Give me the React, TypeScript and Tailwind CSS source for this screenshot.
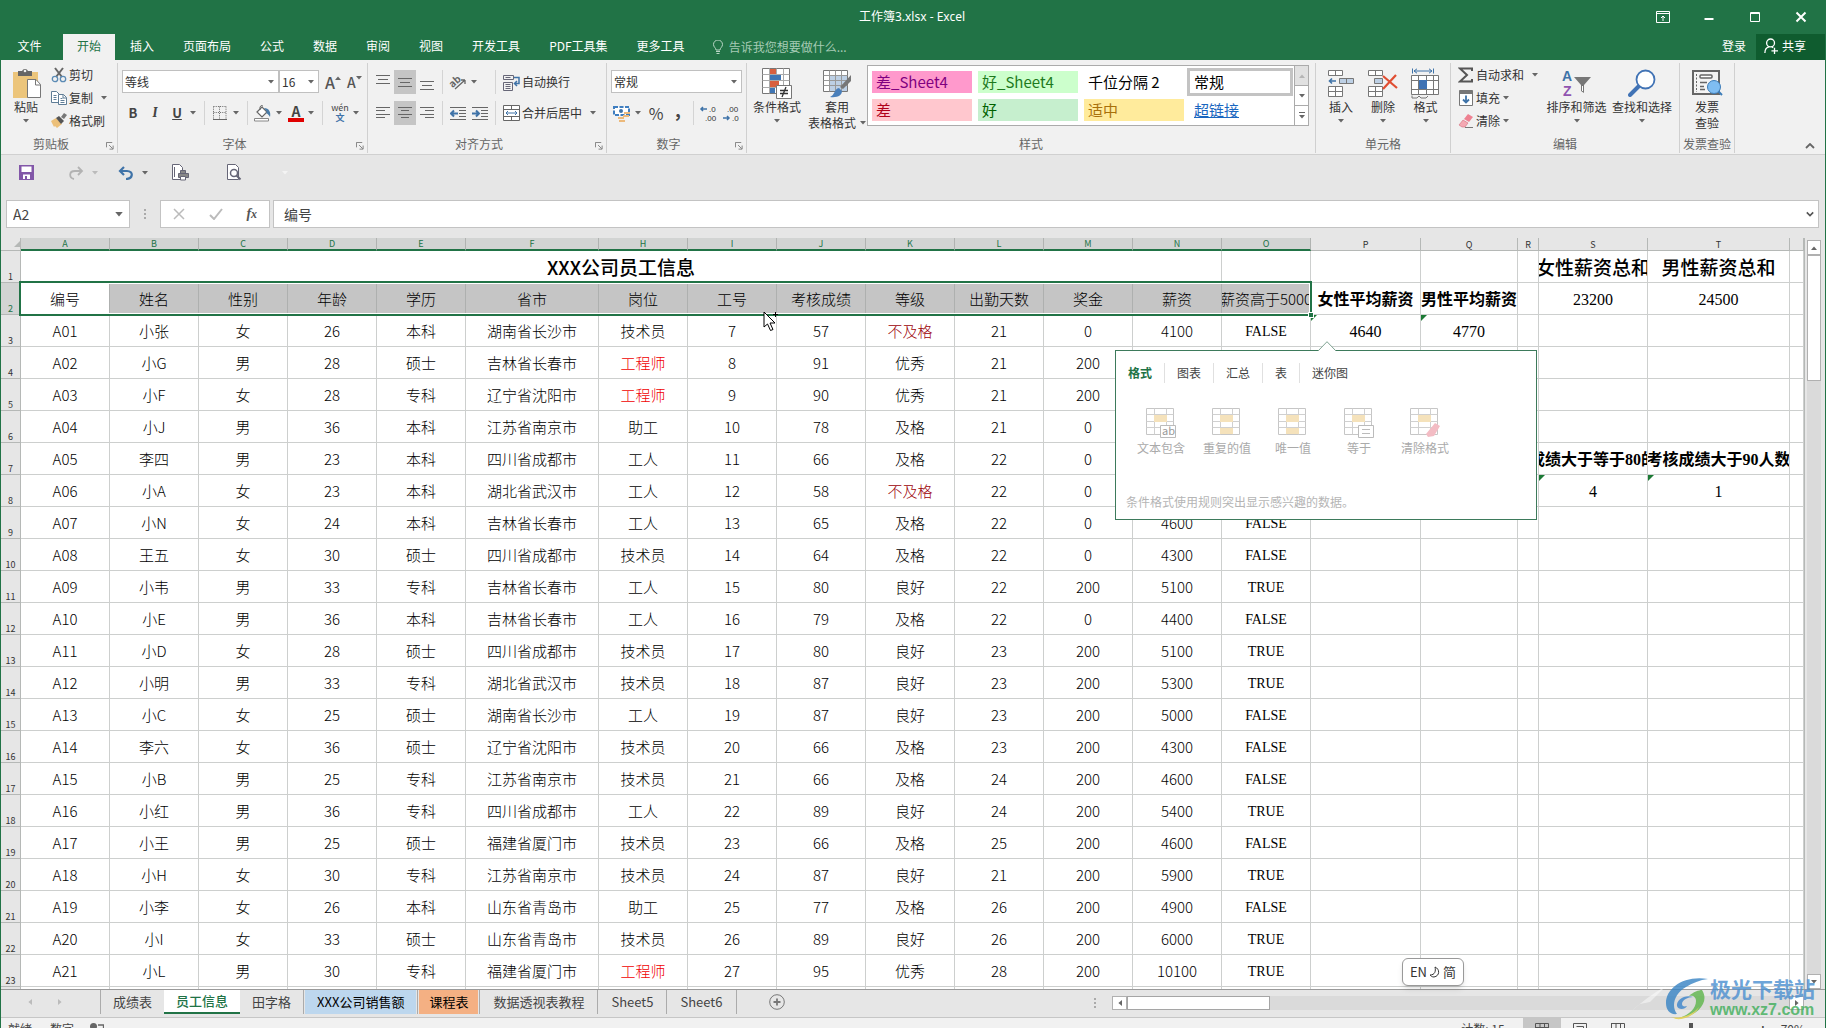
import { useState } from "react";
import type { ReactNode } from "react";
import clsx from "clsx";

type Row = string[];

const columns = [
  { id: "A", width: "w-[89px]" },
  { id: "B", width: "w-[89px]" },
  { id: "C", width: "w-[89px]" },
  { id: "D", width: "w-[89px]" },
  { id: "E", width: "w-[89px]" },
  { id: "F", width: "w-[133px]" },
  { id: "H", width: "w-[89px]" },
  { id: "I", width: "w-[89px]" },
  { id: "J", width: "w-[89px]" },
  { id: "K", width: "w-[89px]" },
  { id: "L", width: "w-[89px]" },
  { id: "M", width: "w-[89px]" },
  { id: "N", width: "w-[89px]" },
  { id: "O", width: "w-[89px]" },
  { id: "P", width: "w-[110px]" },
  { id: "Q", width: "w-[97px]" },
  { id: "R", width: "w-[21px]" },
  { id: "S", width: "w-[109px]" },
  { id: "T", width: "w-[142px]" },
  { id: "", width: "" },
];

const headings = ["编号", "姓名", "性别", "年龄", "学历", "省市", "岗位", "工号", "考核成绩", "等级", "出勤天数", "奖金", "薪资", "薪资高于5000"];

const employees: Row[] = [
  ["A01", "小张", "女", "26", "本科", "湖南省长沙市", "技术员", "7", "57", "不及格", "21", "0", "4100", "FALSE"],
  ["A02", "小G", "男", "28", "硕士", "吉林省长春市", "工程师", "8", "91", "优秀", "21", "200", "", ""],
  ["A03", "小F", "女", "28", "专科", "辽宁省沈阳市", "工程师", "9", "90", "优秀", "21", "200", "", ""],
  ["A04", "小J", "男", "36", "本科", "江苏省南京市", "助工", "10", "78", "及格", "21", "0", "", ""],
  ["A05", "李四", "男", "23", "本科", "四川省成都市", "工人", "11", "66", "及格", "22", "0", "", ""],
  ["A06", "小A", "女", "23", "本科", "湖北省武汉市", "工人", "12", "58", "不及格", "22", "0", "", ""],
  ["A07", "小N", "女", "24", "本科", "吉林省长春市", "工人", "13", "65", "及格", "22", "0", "4600", "FALSE"],
  ["A08", "王五", "女", "30", "硕士", "四川省成都市", "技术员", "14", "64", "及格", "22", "0", "4300", "FALSE"],
  ["A09", "小韦", "男", "33", "专科", "吉林省长春市", "工人", "15", "80", "良好", "22", "200", "5100", "TRUE"],
  ["A10", "小E", "男", "36", "本科", "吉林省长春市", "工人", "16", "79", "及格", "22", "0", "4400", "FALSE"],
  ["A11", "小D", "女", "28", "硕士", "四川省成都市", "技术员", "17", "80", "良好", "23", "200", "5100", "TRUE"],
  ["A12", "小明", "男", "33", "专科", "湖北省武汉市", "技术员", "18", "87", "良好", "23", "200", "5300", "TRUE"],
  ["A13", "小C", "女", "25", "硕士", "湖南省长沙市", "工人", "19", "87", "良好", "23", "200", "5000", "FALSE"],
  ["A14", "李六", "女", "36", "硕士", "辽宁省沈阳市", "技术员", "20", "66", "及格", "23", "200", "4300", "FALSE"],
  ["A15", "小B", "男", "25", "专科", "江苏省南京市", "技术员", "21", "66", "及格", "24", "200", "4600", "FALSE"],
  ["A16", "小红", "男", "36", "专科", "四川省成都市", "工人", "22", "89", "良好", "24", "200", "5400", "TRUE"],
  ["A17", "小王", "男", "25", "硕士", "福建省厦门市", "技术员", "23", "66", "及格", "25", "200", "4600", "FALSE"],
  ["A18", "小H", "女", "30", "专科", "江苏省南京市", "技术员", "24", "87", "良好", "21", "200", "5900", "TRUE"],
  ["A19", "小李", "女", "26", "本科", "山东省青岛市", "助工", "25", "77", "及格", "26", "200", "4900", "FALSE"],
  ["A20", "小I", "女", "33", "硕士", "山东省青岛市", "技术员", "26", "89", "良好", "26", "200", "6000", "TRUE"],
  ["A21", "小L", "男", "30", "专科", "福建省厦门市", "工程师", "27", "95", "优秀", "28", "200", "10100", "TRUE"],
];

// summary cells to the right of the employee list
const extras: Record<string, { text: string; kind: "title" | "bold" | "number"; flag?: boolean }> = {
  S1: { text: "女性薪资总和", kind: "title" },
  T1: { text: "男性薪资总和", kind: "title" },
  P2: { text: "女性平均薪资", kind: "bold" },
  Q2: { text: "男性平均薪资", kind: "bold" },
  S2: { text: "23200", kind: "number" },
  T2: { text: "24500", kind: "number" },
  P3: { text: "4640", kind: "number", flag: true },
  Q3: { text: "4770", kind: "number", flag: true },
  S7: { text: "考核成绩大于等于80的人数", kind: "bold" },
  T7: { text: "考核成绩大于90人数", kind: "bold" },
  S8: { text: "4", kind: "number", flag: true },
  T8: { text: "1", kind: "number", flag: true },
};

const ribbonTabs = ["插入", "页面布局", "公式", "数据", "审阅", "视图", "开发工具", "PDF工具集", "更多工具"];

const Caret = ({ className }: { className?: string }) => (
  <svg viewBox="0 0 6 4" className={clsx("h-1 w-1.5 shrink-0 fill-[#666]", className)}>
    <path d="M0 0h6L3 3.6z" />
  </svg>
);

const Launcher = () => (
  <button aria-label="更多选项" className="absolute right-0.5 bottom-0.5 p-px">
    <svg viewBox="0 0 9 9" className="size-2" fill="none" stroke="#777">
      <path d="M.5 6V.5H7M3.5 3.5l4 4M8 4v4H4" />
    </svg>
  </button>
);

const Group = ({ label, width, launcher, children }: { label: string; width: string; launcher?: boolean; children: ReactNode }) => (
  <div className={clsx("relative flex shrink-0 flex-col border-r border-[#d0d0d0]", width)}>
    <div className="flex h-[72px]">{children}</div>
    <div className={clsx("text-center text-xs leading-[18px] text-[#666]", launcher && "pr-4")}>{label}</div>
    {launcher && <Launcher />}
  </div>
);

const BigButton = ({ icon, lines, width, caret }: { icon: ReactNode; lines: string[]; width: string; caret?: boolean }) => (
  <button className={clsx("flex shrink-0 flex-col items-center pt-1", width)}>
    <span className="flex h-8 items-center">{icon}</span>
    {lines.map((line, i) => (
      <span key={line} className="flex items-center gap-1 text-xs leading-4 whitespace-nowrap">
        {line}
        {caret && i === 1 && <Caret />}
      </span>
    ))}
    {caret && lines.length === 1 && <Caret className="mt-1" />}
  </button>
);

const SmallButton = ({ icon, label, caret }: { icon: ReactNode; label: string; caret?: "near" | "far" }) => (
  <button className="flex h-[23px] items-center gap-0.5 text-xs whitespace-nowrap">
    {icon}
    {label}
    {caret && <Caret className={caret === "far" ? "ml-1.5" : "ml-px"} />}
  </button>
);

const Rule = ({ className }: { className?: string }) => <span className={clsx("h-6 w-px shrink-0 bg-[#d4d4d4]", className)} />;

const Picker = ({ label, value, width }: { label: string; value: string; width: string }) => (
  <span className={clsx("relative flex h-[23px] shrink-0 items-center border border-[#c0c0c0] bg-white", width)}>
    <select aria-label={label} className="size-full appearance-none pl-0.5 text-xs outline-none">
      <option>{value}</option>
    </select>
    <Caret className="pointer-events-none absolute right-1" />
  </span>
);

const PasteIcon = () => (
  <svg viewBox="0 0 29 31" className="h-[31px] w-[29px]">
    <path d="M1 4h25v26H1z" fill="#ecc57b" />
    <path d="M6 3h4a3.2 3.2 0 0 1 6 0h4v5H6z" fill="#666" />
    <circle cx="13" cy="3" r="1.3" fill="#f1f1f1" />
    <path d="M15.500 11.500H24l4.500 5v13h-13z" fill="#fff" stroke="#777" />
    <path d="M23.500 11.500v5.500h5" fill="none" stroke="#777" />
  </svg>
);

const CutIcon = () => (
  <svg viewBox="0 0 16 16" className="size-4" fill="none">
    <path d="M4 1l7 9M12 1L5 10" stroke="#666" strokeWidth="2" />
    <circle cx="4" cy="12" r="2.700" stroke="#5b8bb5" strokeWidth="1.300" />
    <circle cx="12" cy="12" r="2.700" stroke="#5b8bb5" strokeWidth="1.300" />
  </svg>
);

const CopyIcon = () => (
  <svg viewBox="0 0 16 16" className="size-4" fill="#fff" stroke="#5f7d96">
    <path d="M.500 1.500h5l3 3v8h-8z" />
    <path d="M2.500 5.500h3M2.500 7.500h3M2.500 9.500h3" />
    <path d="M7.500 4.500h5l3 3v7h-8z" />
    <path d="M12 4.500v3.500h3.500M9.500 8.500h2M9.500 10.500h4M9.500 12.500h4" fill="none" />
  </svg>
);

const BrushIcon = () => (
  <svg viewBox="0 0 16 16" className="size-4">
    <path d="M0 8l5-3 6 6-5 4-2-2-1 1z" fill="#ecc07a" />
    <path d="M5 5l3-2 5 5-3 3z" fill="#555" />
    <path d="M10 4l3-4 3 2-3 4z" fill="#777" />
  </svg>
);

const HighlightBucket = () => (
  <svg viewBox="0 0 18 17" className="h-[17px] w-[18px]" fill="none">
    <path d="M3 7l5-5 5 5-5 5z" fill="#fff" stroke="#666" strokeWidth="1.200" />
    <path d="M6 5V2a2 2 0 0 1 3-1" stroke="#666" />
    <path d="M10 3c5 0 7 4 6 9-1-2-2-3-4-4l1-1z" fill="#4a7ca8" />
    <path d="M.500 13.500h14v2.500h-14z" fill="#fff" stroke="#888" />
  </svg>
);

const BorderIcon = () => (
  <svg viewBox="0 0 14 14" className="size-3.5" stroke="#666" fill="none">
    <path d="M.500 .500h13M.500 6.500h13M.500 .500v12M6.500 .500v12M13 .500v12" strokeDasharray="1 1.200" />
    <path d="M0 13.500h14" />
  </svg>
);

const Lines = ({ kind }: { kind: "top" | "middle" | "bottom" | "left" | "center" | "right" }) => {
  const d = {
    top: "M1 1.500h14M3 5.500h10M1 9.500h14",
    middle: "M1 4.500h14M3 8.500h10M1 12.500h14",
    bottom: "M1 7.500h14M3 11.500h10M1 15.500h14",
    left: "M1 2.500h14M1 5.500h9M1 9.500h14M1 12.500h9",
    center: "M1 2.500h14M4 5.500h8M1 9.500h14M4 12.500h8",
    right: "M1 2.500h14M6 5.500h9M1 9.500h14M6 12.500h9",
  }[kind];
  const active = kind === "middle" || kind === "center";
  return (
    <button aria-label={kind} className={clsx("flex h-6 w-[22px] items-center justify-center", active && "bg-[#c5c5c5]")}>
      <svg viewBox="0 0 16 16" className="size-4" stroke="#666">
        <path d={d} />
      </svg>
    </button>
  );
};

const Indent = ({ out }: { out?: boolean }) => (
  <button aria-label={out ? "减少缩进量" : "增加缩进量"} className="flex w-[22px] justify-center">
    <svg viewBox="0 0 16 14" className="h-3.5 w-4" fill="none" stroke="#666">
      <path d="M0 1.500h16M9 4.500h7M9 7.500h7M9 10.500h7M0 13.500h16" />
      <path d={out ? "M8 7.500H2M4 4.500l-3 3 3 3" : "M0 7.500h6M4 4.500l3 3-3 3"} stroke="#3f73a8" strokeWidth="2" />
    </svg>
  </button>
);

const OrientationIcon = () => (
  <svg viewBox="0 0 18 18" className="size-[18px] overflow-visible">
    <text x="0" y="10" fontSize="10" fontWeight="bold" fill="#666" transform="rotate(-42 6 9) translate(0 2)">ab</text>
    <path d="M6 16L16 7M16 7h-4M16 7v4" stroke="#666" fill="none" strokeWidth="1.300" />
  </svg>
);

const WrapIcon = () => (
  <svg viewBox="0 0 17 17" className="size-[17px]" fill="none" stroke="#667">
    <path d="M.500 1.500h10v4H.500zM.500 8.500h9v8h-9zM2.500 10.500h5M2.500 12.500h5M2.500 14.500h5M2.500 3.500h5" />
    <path d="M11 3.500h5v6h-4M14 7l-2.500 2.500L14 12" stroke="#3f73a8" strokeWidth="1.500" />
  </svg>
);

const MergeIcon = () => (
  <svg viewBox="0 0 17 16" className="h-4 w-[17px]" fill="#fff" stroke="#666">
    <path d="M.500 .500h16v15H.500zM.500 4.500h16M.500 11.500h16M8.500 .500v4M8.500 11.500v4" />
    <path d="M3 8h11M5 6L3 8l2 2M12 6l2 2-2 2" fill="none" stroke="#3f73a8" />
  </svg>
);

const CurrencyIcon = () => (
  <svg viewBox="0 0 18 17" className="h-[17px] w-[18px]">
    <path d="M1 2h15v8H1z" fill="#fff" stroke="#3f7ec0" strokeWidth="2" strokeDasharray="4 1.500" />
    <circle cx="8" cy="6" r="2" fill="#3f73a8" />
    <path d="M11 7h6v2h-6zM10 10h6v2h-6zM5 12h6v2H5zM6 15h6v2H6z" fill="#ecb97b" />
  </svg>
);

const Decimal = ({ more }: { more?: boolean }) => (
  <button aria-label={more ? "增加小数位数" : "减少小数位数"} className="flex w-[22px] justify-center">
    <svg viewBox="0 0 18 16" className="h-4 w-[18px] overflow-visible font-['Liberation_Sans',sans-serif]" fontSize="8" fill="#333">
      <text x={more ? 9 : 5} y="7">{more ? ".0" : ".00"}</text>
      <text x={more ? 5 : 10} y="16">{more ? ".00" : ".0"}</text>
      <path d={more ? "M7 4H1M3 2L1 4l2 2" : "M1 13h6M5 11l2 2-2 2"} stroke="#3f73a8" strokeWidth="1.500" fill="none" />
    </svg>
  </button>
);

const ConditionalIcon = () => (
  <svg viewBox="0 0 30 31" className="h-[31px] w-[30px]">
    <path d="M.500 .500h27v25H.500z" fill="#fff" stroke="#777" />
    <path d="M.500 6.500h27M.500 12.500h27M.500 19.500h27M7.500 .500v25M14.500 .500v25M21.500 .500v25" stroke="#aaa" />
    <path d="M8 1h6v5H8zM8 13h9v6H8z" fill="#d8603f" />
    <path d="M8 7h11v5H8zM8 20h5v5H8z" fill="#4076b4" />
    <path d="M14.500 17.500h15v13h-15z" fill="#fff" stroke="#777" />
    <path d="M18 22.500h8M18 25.500h8M24 19l-4 10" stroke="#333" strokeWidth="1.300" />
  </svg>
);

const TableFormatIcon = () => (
  <svg viewBox="0 0 30 30" className="size-[30px]">
    <path d="M1.500 2.500h24v21h-24z" fill="#fff" stroke="#777" />
    <path d="M8 8h17v15H8z" fill="#bdd0e5" />
    <path d="M1.500 7.500h24M1.500 12.500h24M1.500 17.500h24M7.500 2.500v21M13.500 2.500v21M19.500 2.500v21" stroke="#999" />
    <path d="M29 7v6l-8 8-3-2z" fill="#777" />
    <path d="M17 20l3 3c0 4-4 7-12 6 5-2 4-8 9-9z" fill="#4a7fba" />
  </svg>
);

const InsertIcon = () => (
  <svg viewBox="0 0 28 28" className="size-7" fill="#fff" stroke="#777">
    <path d="M1.500 1.500h14v5h-14zM8.500 1.500v5M1.500 17.500h14v10h-14zM8.500 17.500v10M1.500 22.500h14" />
    <path d="M12.500 9.500h14v5h-14zM19.500 9.500v5" fill="#bdd0e5" />
    <path d="M9 12H3M5 9.500L2.500 12 5 14.500" fill="none" stroke="#3f73a8" strokeWidth="1.600" />
  </svg>
);

const DeleteIcon = () => (
  <svg viewBox="0 0 30 28" className="h-7 w-[30px]" fill="#fff" stroke="#777">
    <path d="M.500 1.500h14v5H.500zM7.500 1.500v5M.500 17.500h14v10H.500zM7.500 17.500v10M.500 22.500h14" />
    <path d="M6.500 9.500h8v5h-8z" fill="#bdd0e5" />
    <path d="M15 7l14 12M28 6L15 20" stroke="#e04e32" strokeWidth="2.200" />
  </svg>
);

const FormatIcon = () => (
  <svg viewBox="0 0 29 31" className="h-[31px] w-[29px]" fill="#fff" stroke="#777">
    <path d="M.500 7.500h27v19H.500zM.500 12.500h27M.500 21.500h27M7.500 7.500v19M15.500 7.500v19M22.500 7.500v19" />
    <path d="M8 12h8v9H8z" fill="#3f73b4" stroke="none" />
    <path d="M1.500 .500v5M22.500 .500v5M3 3h18M6 .800L3 3l3 2.200M18 .800L21 3l-3 2.200" fill="none" stroke="#3f73a8" />
    <path d="M1 27.500v2.500h5l2-2 2 2h5l2-2" fill="none" />
  </svg>
);

const SortIcon = () => (
  <svg viewBox="0 0 30 28" className="h-7 w-[30px] overflow-visible font-['Liberation_Sans',sans-serif]">
    <text x="0" y="12" fontSize="14" fontWeight="bold" fill="#3f73a8">A</text>
    <text x="1" y="27" fontSize="14" fontWeight="bold" fill="#9054b0">Z</text>
    <path d="M12 8h17l-7 8v8l-3-2v-6z" fill="#777" />
    <path d="M20.500 17v5" stroke="#fff" />
  </svg>
);

const FindIcon = () => (
  <svg viewBox="0 0 28 28" className="size-7" fill="none">
    <path d="M11 17L2 26" stroke="#4173b5" strokeWidth="4" strokeLinecap="round" />
    <circle cx="17.500" cy="10.500" r="9" fill="#fff" stroke="#4173b5" strokeWidth="1.800" />
  </svg>
);

const InvoiceIcon = () => (
  <svg viewBox="0 0 31 28" className="h-7 w-[31px]">
    <path d="M1 2h26v23H1z" fill="#f4f4f4" stroke="#666" strokeWidth="2" />
    <path d="M4.500 5v18" stroke="#666" strokeDasharray="2 1.500" />
    <rect x="8" y="6" width="12" height="3" rx="1" fill="#fff" stroke="#666" strokeWidth="1.500" />
    <path d="M8 13.500h7M8 17.500h4M8 20.500h5" stroke="#666" strokeWidth="1.500" />
    <path d="M26 22l4 4" stroke="#3c7cb8" strokeWidth="2" />
    <circle cx="22" cy="18" r="6.500" fill="#7fbdf2" stroke="#3c7cb8" />
  </svg>
);

const TitleBar = () => (
  <div className="flex h-[34px] shrink-0 items-center bg-[#217346] text-white">
    <div className="flex-1 pl-3" />
    <h1 className="font-['Noto_Sans','Noto_Sans_CJK_SC',sans-serif] text-xs">工作簿3.xlsx - Excel</h1>
    <div className="flex flex-1 justify-end gap-[26px] pr-3.5">
      <button aria-label="功能区显示选项" className="flex w-5 justify-center">
        <svg viewBox="0 0 14 12" className="h-3 w-3.5" fill="none" stroke="#fff">
          <path d="M.500 .500h13v11H.500zM.500 2.500h13M7 10V5M5 7l2-2 2 2" />
        </svg>
      </button>
      <button aria-label="最小化" className="flex w-5 justify-center">
        <svg viewBox="0 0 12 12" className="size-3" stroke="#fff" strokeWidth="2"><path d="M1.500 8h9" /></svg>
      </button>
      <button aria-label="最大化" className="flex w-5 justify-center">
        <svg viewBox="0 0 12 12" className="size-3" fill="none" stroke="#fff"><path d="M1.500 1.500h9v9h-9zM1 2.500h10" /></svg>
      </button>
      <button aria-label="关闭" className="flex w-5 justify-center">
        <svg viewBox="0 0 12 12" className="size-3" stroke="#fff" strokeWidth="2"><path d="M1.500 1.500l9 9M10.500 1.500l-9 9" /></svg>
      </button>
    </div>
  </div>
);

const RibbonTabs = () => (
  <div className="flex h-[26px] shrink-0 items-stretch bg-[#217346] text-xs text-white">
    <nav className="flex gap-px">
      <button className="w-[61px] pr-1 pb-0.5">文件</button>
      <button className="bg-[#f1f1f1] px-3.5 pb-0.5 text-[#217346]">开始</button>
      {ribbonTabs.map((tab) => (
        <button key={tab} className="px-3.5 pb-0.5">{tab}</button>
      ))}
    </nav>
    <label className="ml-3.5 flex flex-1 items-center gap-1.5">
      <svg viewBox="0 0 10 14" className="h-3.5 w-2.5" fill="none" stroke="#b9d6c5">
        <path d="M3 10c0-2-2.500-3-2.500-5.500a4.500 4.500 0 0 1 9 0C9.500 7 7 8 7 10zM3 11.500h4M3.500 13.500h3" />
      </svg>
      <input aria-label="告诉我" placeholder="告诉我您想要做什么..." className="w-40 bg-transparent outline-none placeholder:text-[#a6cbb5]" />
    </label>
    <button className="px-2.5 pb-0.5">登录</button>
    <button className="flex w-[69px] items-center gap-1 bg-[#0f5c2f] pb-0.5 pl-2">
      <svg viewBox="0 0 16 18" className="h-4 w-3.5" fill="none" stroke="#fff" strokeWidth="1.500">
        <circle cx="7.500" cy="5.500" r="4.500" />
        <path d="M1 17c0-4 2-6.500 5-7M9 10l1.500 1M12 11v7M8.500 14.500H16" />
      </svg>
      共享
    </button>
  </div>
);

const StyleCell = ({ text, className }: { text: string; className: string }) => (
  <button className={clsx("h-[22px] w-[100px] pl-1 text-left text-[15px] leading-[22px] whitespace-nowrap", className)}>{text}</button>
);

const Ribbon = () => (
  <div className="flex h-[95px] shrink-0 border-b border-[#d0d0d0] bg-[#f1f1f1] pt-[3px] pb-px text-[#333]">
    <Group label="剪贴板" width="w-[117px]" launcher>
      <BigButton icon={<PasteIcon />} lines={["粘贴"]} width="w-[50px]" caret />
      <div className="flex flex-col">
        <SmallButton icon={<CutIcon />} label="剪切" />
        <SmallButton icon={<CopyIcon />} label="复制" caret="far" />
        <SmallButton icon={<BrushIcon />} label="格式刷" />
      </div>
    </Group>

    <Group label="字体" width="w-[250px]" launcher>
      <div className="flex flex-col gap-2 pt-[7px] pl-1">
        <div className="flex items-center">
          <Picker label="字体" value="等线" width="w-[157px]" />
          <Picker label="字号" value="16" width="w-10" />
          <button aria-label="增大字号" className="ml-1.5 flex w-5 items-start text-base leading-5 font-medium text-[#555]">A<Caret className="mt-1 rotate-180 fill-[#3f73a8]" /></button>
          <button aria-label="减小字号" className="ml-0.5 flex w-5 items-start text-sm leading-5 font-medium text-[#555]">A<Caret className="mt-1 fill-[#3f73a8]" /></button>
        </div>
        <div className="flex h-6 items-center text-[#444]">
          <button className="w-[22px] text-[13px] font-bold">B</button>
          <button className="w-[22px] font-serif text-sm font-bold italic">I</button>
          <button className="w-[22px] text-[13px] font-bold underline">U</button>
          <Caret className="mx-0.5" />
          <Rule className="mr-2 ml-1.5" />
          <BorderIcon />
          <Caret className="mx-1.5" />
          <Rule className="mr-1.5 ml-0.5" />
          <HighlightBucket />
          <Caret className="mx-1" />
          <button aria-label="字体颜色" className="ml-0.5 w-4 border-b-4 border-[#e00000] text-center text-sm leading-[14px] font-bold">A</button>
          <Caret className="mx-1" />
          <Rule className="mr-2 ml-1" />
          <button className="flex w-[18px] flex-col items-center text-[9px] leading-[10px]">wén<span className="font-bold text-[#3f73a8]">文</span></button>
          <Caret className="mx-1" />
        </div>
      </div>
    </Group>

    <Group label="对齐方式" width="w-[239px]" launcher>
      <div className="flex flex-col gap-[7px] pt-[7px] pl-1">
        <div className="flex items-center">
          <Lines kind="top" />
          <Lines kind="middle" />
          <Lines kind="bottom" />
        </div>
        <div className="flex items-center">
          <Lines kind="left" />
          <Lines kind="center" />
          <Lines kind="right" />
        </div>
      </div>
      <div className="flex flex-col gap-[7px] pt-[7px] pl-1">
        <div className="flex h-6 items-center">
          <Rule className="mr-1.5" />
          <OrientationIcon />
          <Caret className="ml-1" />
        </div>
        <div className="flex h-6 items-center">
          <Rule className="mr-1" />
          <Indent out />
          <Indent />
        </div>
      </div>
      <div className="flex flex-col gap-[7px] pt-[7px] pl-1">
        <div className="flex h-6 items-center gap-[7px]">
          <Rule />
          <SmallButton icon={<WrapIcon />} label="自动换行" />
        </div>
        <div className="flex h-6 items-center gap-[7px]">
          <Rule />
          <SmallButton icon={<MergeIcon />} label="合并后居中" caret="far" />
        </div>
      </div>
    </Group>

    <Group label="数字" width="w-[140px]" launcher>
      <div className="flex flex-col gap-2 pt-[7px] pl-1">
        <Picker label="数字格式" value="常规" width="w-[131px]" />
        <div className="flex h-6 items-center text-[#444]">
          <span className="ml-0.5"><CurrencyIcon /></span>
          <Caret className="mx-1" />
          <button className="w-[22px] text-base">%</button>
          <button className="w-[22px] pb-2 text-lg leading-4 font-bold">,</button>
          <Rule className="mx-1" />
          <Decimal more />
          <Decimal />
        </div>
      </div>
    </Group>

    <Group label="样式" width="w-[569px]">
      <BigButton icon={<ConditionalIcon />} lines={["条件格式"]} width="w-[60px]" caret />
      <BigButton icon={<TableFormatIcon />} lines={["套用", "表格格式"]} width="w-[60px]" caret />
      <div className="mt-0.5 flex h-[61px] border border-[#ababab] bg-white">
        <div className="grid grid-cols-4 content-center gap-x-1.5 gap-y-1.5 px-1">
          <StyleCell text="差_Sheet4" className="bg-[#ff99cc] text-[#800080]" />
          <StyleCell text="好_Sheet4" className="bg-[#ccffcc] text-[#1e7a1e]" />
          <StyleCell text="千位分隔 2" className="text-black" />
          <StyleCell text="常规" className="text-black outline-3 outline-[#c3c3c3]" />
          <StyleCell text="差" className="bg-[#ffc7ce] text-[#b0001a]" />
          <StyleCell text="好" className="bg-[#c6efce] text-[#006100]" />
          <StyleCell text="适中" className="bg-[#ffeb9c] text-[#a8700a]" />
          <StyleCell text="超链接" className="text-[#1a66c0] underline" />
        </div>
        <div className="flex w-3.5 flex-col divide-y divide-[#ababab] border-l border-[#ababab]">
          <button aria-label="上一行" className="flex flex-1 items-center justify-center bg-[#e1e1e1]"><Caret className="rotate-180 fill-[#b5b5b5]" /></button>
          <button aria-label="下一行" className="flex flex-1 items-center justify-center"><Caret /></button>
          <button aria-label="其他" className="flex flex-1 flex-col items-center justify-center gap-0.5"><span className="h-px w-1.5 bg-[#666]" /><Caret /></button>
        </div>
      </div>
    </Group>

    <Group label="单元格" width="w-[135px]">
      <div className="flex pl-1">
        <BigButton icon={<InsertIcon />} lines={["插入"]} width="w-[42px]" caret />
        <BigButton icon={<DeleteIcon />} lines={["删除"]} width="w-[42px]" caret />
        <BigButton icon={<FormatIcon />} lines={["格式"]} width="w-[43px]" caret />
      </div>
    </Group>

    <Group label="编辑" width="w-[229px]">
      <div className="flex w-[91px] flex-col pl-[7px]">
        <SmallButton
          icon={<svg viewBox="0 0 16 16" className="size-4" fill="none" stroke="#555" strokeWidth="2"><path d="M14 4V1.500H2L9 8l-7 6.500h12V12" /></svg>}
          label="自动求和"
          caret="far"
        />
        <SmallButton
          icon={
            <svg viewBox="0 0 16 16" className="size-4" fill="#fff" stroke="#777">
              <path d="M1.500 .500h13v15h-13z" />
              <path d="M1.500 1h13v2.500h-13z" fill="#777" />
              <path d="M8 5.500v7M5 9.500l3 3 3-3" fill="none" stroke="#3f73a8" strokeWidth="1.800" />
            </svg>
          }
          label="填充"
          caret="near"
        />
        <SmallButton
          icon={
            <svg viewBox="0 0 16 16" className="size-4">
              <path d="M10 1l5 3-4 5-5-3z" fill="#ee8191" />
              <path d="M5 7l5 3-3 4H4l-3-2z" fill="#f4a9b3" stroke="#d36c7c" strokeWidth=".6" />
              <path d="M7 14.500h8" stroke="#777" />
            </svg>
          }
          label="清除"
          caret="near"
        />
      </div>
      <BigButton icon={<SortIcon />} lines={["排序和筛选"]} width="w-[69px]" caret />
      <BigButton icon={<FindIcon />} lines={["查找和选择"]} width="w-[62px]" caret />
    </Group>

    <Group label="发票查验" width="w-[55px]">
      <BigButton icon={<InvoiceIcon />} lines={["发票", "查验"]} width="w-[54px]" />
    </Group>
    <div className="flex flex-1 items-end justify-end pr-2.5 pb-1">
      <button aria-label="折叠功能区">
        <svg viewBox="0 0 10 6" className="h-1.5 w-2.5" fill="none" stroke="#666" strokeWidth="1.800"><path d="M1 5l4-4 4 4" /></svg>
      </button>
    </div>
  </div>
);

const QuickAccess = () => (
  <div className="flex h-[45px] shrink-0 items-center pr-4 pb-2.5 pl-[18px]">
    <button aria-label="保存" className="mr-[34px]">
      <svg viewBox="0 0 15 15" className="size-[15px]"><path d="M0 0h15v15H0z" fill="#8257a8" /><path d="M2.500 1.500h10v5.500h-10zM4 9.500h7V14H4z" fill="#fff" /><path d="M6 11h2v3H6z" fill="#8257a8" /></svg>
    </button>
    <button aria-label="恢复" className="flex items-center gap-2">
      <svg viewBox="0 0 16 14" className="h-3.5 w-4" fill="none" stroke="#b3b3b3" strokeWidth="1.800"><path d="M6 13C1 12 .500 5 7 5h7M10 1l4 4-4 4" /></svg>
      <Caret className="fill-[#bbb]" />
    </button>
    <button aria-label="撤消" className="ml-5 flex items-center gap-2">
      <svg viewBox="0 0 16 14" className="h-3.5 w-4" fill="none" stroke="#3f73a8" strokeWidth="2.200"><path d="M8 13c7 0 8-8 1-8H2M6 1L2 5l4 4" /></svg>
      <Caret />
    </button>
    <button aria-label="快速打印" className="ml-6">
      <svg viewBox="0 0 17 17" className="size-[17px]" fill="#fff" stroke="#667">
        <path d="M8 15.500H.500V.500h7l3 3V6M2.500 3v10" />
        <path d="M8.500 6.500h5v3h-5zM6.500 9.500h10v4h-10z" fill="#888" />
        <path d="M8.500 12.500h5v3.500h-5z" />
      </svg>
    </button>
    <button aria-label="打印预览" className="ml-[37px]">
      <svg viewBox="0 0 16 17" className="h-[17px] w-4" fill="#fff" stroke="#667">
        <path d="M1.500 .500h8l3 3v12h-11z" />
        <circle cx="8" cy="9" r="3.500" strokeWidth="1.500" />
        <path d="M10.500 11.500l4 4" strokeWidth="2" />
      </svg>
    </button>
    <Caret className="ml-10 fill-[#f4f4f4]" />
  </div>
);

const FormulaBar = () => (
  <div className="mr-1.5 ml-[5px] flex h-7 shrink-0 text-sm text-[#444]">
    <div className="flex w-[124px] items-center border border-[#c3c3c3] bg-white pr-1.5 pl-1.5">
      <input aria-label="名称框" defaultValue="A2" className="w-0 flex-1 outline-none" />
      <Caret className="h-[5px] w-2" />
    </div>
    <div className="flex w-[30px] flex-col items-center justify-center gap-0.5">
      <i className="size-0.5 bg-[#aaa]" />
      <i className="size-0.5 bg-[#aaa]" />
      <i className="size-0.5 bg-[#aaa]" />
    </div>
    <div className="mr-[3px] flex w-[110px] items-center justify-around border border-[#c3c3c3] bg-white">
      <button aria-label="取消"><svg viewBox="0 0 12 12" className="size-3" stroke="#bbb" strokeWidth="1.500"><path d="M1 1l10 10M11 1L1 11" /></svg></button>
      <button aria-label="输入"><svg viewBox="0 0 14 12" className="h-3 w-3.5" fill="none" stroke="#bbb" strokeWidth="2"><path d="M1 7l4 4 8-10" /></svg></button>
      <button className="font-['Liberation_Serif',serif] text-sm leading-5 font-bold text-[#555] italic">f<span className="text-xs">x</span></button>
    </div>
    <div className="flex flex-1 items-center border border-[#c3c3c3] bg-white pr-1 pl-2.5">
      <input aria-label="编辑栏" defaultValue="编号" className="flex-1 outline-none" />
      <svg viewBox="0 0 10 6" className="h-1.5 w-2" fill="none" stroke="#555" strokeWidth="2"><path d="M1 1l4 4 4-4" /></svg>
    </div>
  </div>
);

const cellBase = "relative h-8 overflow-hidden border-r border-b border-[#cdcfce] p-0";

const CellText = ({ className, children }: { className?: string; children: ReactNode }) => (
  <div className={clsx("flex justify-center whitespace-nowrap", className)}>{children}</div>
);

const ExtraCell = ({ id }: { id: string }) => {
  const cell = extras[id];
  return (
    <td className={cellBase}>
      {cell?.flag && (
        <svg viewBox="0 0 6 6" className="absolute top-0 left-0 size-1.5 fill-[#1c7a35]"><path d="M0 0h6L0 6z" /></svg>
      )}
      {cell && (
        <CellText
          className={clsx(
            cell.kind === "title" && "text-[19px] leading-7 font-medium",
            cell.kind === "bold" && "pt-0.5 font-['Liberation_Serif','Noto_Sans_CJK_SC',serif] text-base leading-6 font-bold",
            cell.kind === "number" && "pt-0.5 font-['Liberation_Serif',serif] text-base leading-6"
          )}
        >
          {cell.text}
        </CellText>
      )}
    </td>
  );
};

const RowHead = ({ n, active }: { n: number; active?: boolean }) => (
  <th className={clsx("h-8 border-r border-b border-[#b5b8b6] p-0 align-bottom text-[9px] leading-[10px] font-normal", active ? "bg-[#d2d4d3] text-[#217346]" : "bg-[#e6e6e6] text-[#333]")}>
    {n}
  </th>
);

const textColor = (value: string) => {
  if (value === "工程师") return "text-[#f00000]";
  if (value === "不及格") return "text-[#9c0006]";
  return "text-black";
};

const Grid = () => (
  <table className="w-full table-fixed border-separate border-spacing-0 bg-white text-[15px] leading-6 font-light text-black">
    <colgroup>
      <col className="w-5" />
      {columns.map((col) => <col key={col.id} className={col.width} />)}
    </colgroup>
    <thead>
      <tr className="h-[13px]">
        <th className="h-[13px] border-r border-b border-[#b5b8b6] bg-[#e6e6e6] p-0">
          <svg viewBox="0 0 6 6" className="ml-auto size-1.5 fill-[#b5b8b6]"><path d="M6 0v6H0z" /></svg>
        </th>
        {columns.map((col, i) => (
          <th
            key={col.id}
            className={clsx(
              "h-[13px] overflow-hidden border-r p-0 text-[9px] leading-[11px] font-normal",
              i < 14 ? "border-b-2 border-r-[#b0b3b1] border-b-[#217346] bg-[#d2d4d3] text-[#217346]" : "border-b border-[#b5b8b6] bg-[#e6e6e6] text-[#333]"
            )}
          >
            {col.id}
          </th>
        ))}
      </tr>
    </thead>
    <tbody>
      <tr>
        <RowHead n={1} />
        <td colSpan={13} className={cellBase}>
          <CellText className="text-[19px] leading-7 font-medium">XXX公司员工信息</CellText>
        </td>
        {columns.slice(13).map((col) => <ExtraCell key={col.id} id={`${col.id}1`} />)}
      </tr>
      <tr>
        <RowHead n={2} active />
        {headings.map((text, i) => (
          <td key={text} className={clsx("relative h-8 overflow-hidden border-r border-b border-[#aeb0af] p-0", i > 0 && "bg-[#c5c5c5]")}>
            <CellText>{text}</CellText>
          </td>
        ))}
        {columns.slice(14).map((col) => <ExtraCell key={col.id} id={`${col.id}2`} />)}
      </tr>
      {employees.map((row, r) => (
        <tr key={row[0]}>
          <RowHead n={r + 3} />
          {row.map((value, c) => (
            <td key={c} className={cellBase}>
              <CellText className={c === 13 ? "pt-0.5 font-['Liberation_Serif',serif] text-sm leading-6" : textColor(value)}>{value}</CellText>
            </td>
          ))}
          {columns.slice(14).map((col) => <ExtraCell key={col.id} id={`${col.id}${r + 3}`} />)}
        </tr>
      ))}
      <tr>
        <RowHead n={24} />
        {columns.map((col) => <td key={col.id} className={cellBase} />)}
      </tr>
    </tbody>
  </table>
);

const AnalysisIcon = ({ kind }: { kind: string }) => (
  <svg viewBox="0 0 30 30" className="size-[30px]" fill="none">
    <path d="M.500 .500h27v26H.500z" fill="#fff" stroke="#c6c6c6" />
    <path d="M.500 6.500h27M.500 13.500h27M.500 19.500h27M8.500 .500v26M20.500 .500v26" stroke="#d0d0d0" />
    <path d="M8 7h13v7H8z" fill="#f5e2bb" />
    {(kind === "重复的值" || kind === "唯一值") && <path d="M8 20h13v6H8z" fill="#f5e2bb" />}
    {kind === "文本包含" && (
      <>
        <path d="M14.500 17.500h15v12h-15z" fill="#fff" stroke="#bbb" />
        <text x="16" y="27" fontSize="11" fill="#999">ab</text>
      </>
    )}
    {kind === "等于" && <path d="M14.500 17.500h15v12h-15zM18 21.500h8M18 25.500h8" fill="#fff" stroke="#bbb" />}
    {kind === "清除格式" && <path d="M25 15l5 3-6 10-6 1-2-3z" fill="#f3bcc4" />}
  </svg>
);

const analysisTabs = ["图表", "汇总", "表", "迷你图"];
const analysisItems = ["文本包含", "重复的值", "唯一值", "等于", "清除格式"];

const QuickAnalysis = () => (
  <div className="absolute top-28 left-[1114px] flex h-[170px] w-[422px] flex-col border border-[#3d7a5b] bg-white pt-3 pb-[7px] text-xs">
    <svg viewBox="0 0 18 10" className="absolute -top-2.5 left-[202px] h-2.5 w-[18px]" fill="#fff" stroke="#7fa392">
      <path d="M0 10l9-9.300 9 9.300" />
    </svg>
    <div className="flex items-center divide-x divide-[#e0e0e0] text-[#444]">
      <button className="pr-3 pl-3 leading-5 font-bold text-[#217346]">格式</button>
      {analysisTabs.map((tab) => (
        <button key={tab} className="px-3 leading-5">{tab}</button>
      ))}
    </div>
    <div className="mt-[25px] flex pl-3">
      {analysisItems.map((item) => (
        <button key={item} className="flex w-[66px] flex-col items-center text-[#aaa]">
          <AnalysisIcon kind={item} />
          <span className="leading-5">{item}</span>
        </button>
      ))}
    </div>
    <p className="mt-auto pl-2.5 leading-5 text-[#b5b5b5]">条件格式使用规则突出显示感兴趣的数据。</p>
  </div>
);

const VerticalScroll = () => (
  <div className="flex w-[21px] shrink-0 flex-col items-center border-l border-[#b5b8b6] bg-[#e6e6e6] pt-0.5 pr-0.5">
    <button aria-label="向上滚动" className="flex h-[15px] w-3.5 shrink-0 items-center justify-center border border-[#b0b0b0] bg-white"><Caret className="rotate-180" /></button>
    <div className="w-3.5 flex-1 bg-[#dadada]">
      <div className="h-[126px] border border-[#b0b0b0] bg-white" />
    </div>
    <button aria-label="向下滚动" className="flex h-[15px] w-3.5 shrink-0 items-center justify-center border border-[#b0b0b0] bg-white"><Caret /></button>
  </div>
);

const sheets = [
  { name: "成绩表" },
  { name: "员工信息" },
  { name: "田字格" },
  { name: "XXX公司销售额", tone: "bg-[#bdd7ee] text-black px-3 mx-px" },
  { name: "课程表", tone: "bg-[#f4b083] text-black px-2.5 mx-px" },
  { name: "数据透视表教程", tone: "px-[13px]" },
  { name: "Sheet5", tone: "px-[13px]" },
  { name: "Sheet6", tone: "px-[13px]" },
];

const SheetTabs = () => {
  const [active, setActive] = useState("员工信息");
  return (
    <div className="flex h-7 shrink-0 items-start border-t border-[#9a9a9a] bg-[#e6e6e6] pr-[21px] text-[13px] text-[#444]">
      <div className="flex h-6 w-[99px] shrink-0 items-center justify-center gap-6 pr-3">
        <Caret className="rotate-90 fill-[#bbb]" />
        <Caret className="-rotate-90 fill-[#bbb]" />
      </div>
      <div className="flex h-6 shrink-0 border-l border-[#ababab]">
        {sheets.map(({ name, tone }) => (
          <div key={name} className={clsx("flex", name !== active && name !== "成绩表" && "border-r border-[#ababab]")}>
            <button
              onClick={() => setActive(name)}
              className={clsx(
                "leading-5 whitespace-nowrap",
                name === active ? "border-b-2 border-[#217346] bg-white px-3 font-medium text-[#217346]" : tone ?? "px-3"
              )}
            >
              {name}
            </button>
          </div>
        ))}
      </div>
      <button aria-label="新工作表" className="ml-8 flex h-6 items-center">
        <svg viewBox="0 0 16 16" className="size-4" fill="none" stroke="#777"><circle cx="8" cy="8" r="7.300" /><path d="M8 4.500v7M4.500 8h7" strokeWidth="1.800" /></svg>
      </button>
      <div className="flex-1" />
      <div className="flex h-[26px] w-[710px] items-center">
        <div className="mr-4 flex flex-col gap-0.5">
          <i className="size-0.5 bg-[#aaa]" />
          <i className="size-0.5 bg-[#aaa]" />
          <i className="size-0.5 bg-[#aaa]" />
        </div>
        <button aria-label="向左滚动" className="flex h-3.5 w-[15px] items-center justify-center border border-[#b0b0b0] bg-white"><Caret className="rotate-90" /></button>
        <div className="h-3.5 flex-1 bg-[#dadada]"><div className="h-full w-[143px] border border-[#a5a5a5] bg-white" /></div>
        <button aria-label="向右滚动" className="flex h-3.5 w-[15px] items-center justify-center border border-[#b0b0b0] bg-white"><Caret className="-rotate-90" /></button>
      </div>
    </div>
  );
};

const StatusBar = () => (
  <div className="flex h-[22px] shrink-0 items-center border-t border-[#c6c6c6] bg-[#f1f1f1] pr-5 pl-[7px] text-xs text-[#444]">
    <span className="mr-[18px]">就绪</span>
    <span className="mr-4">数字</span>
    <svg viewBox="0 0 14 12" className="h-3 w-3.5"><circle cx="3.500" cy="3.500" r="3.500" fill="#666" /><path d="M8 2h5.500v8H2V8" fill="none" stroke="#666" strokeWidth="1.300" /></svg>
    <div className="flex-1" />
    <span className="mr-[18px]">计数: 15</span>
    <button aria-label="普通" className="flex h-full w-[38px] items-center justify-center bg-[#c6c6c6]">
      <svg viewBox="0 0 14 12" className="h-3 w-3.5" fill="none" stroke="#555"><path d="M.500 .500h13v11H.500zM.500 4.500h13M.500 8.500h13M5 .500v11M9.500 .500v11" /></svg>
    </button>
    <button aria-label="页面布局" className="flex h-full w-[38px] items-center justify-center">
      <svg viewBox="0 0 14 12" className="h-3 w-3.5" fill="none" stroke="#555"><path d="M.500 .500h13v11H.500zM3.500 3.500h7v8h-7M5 5.500h4M5 7.500h4" /></svg>
    </button>
    <button aria-label="分页预览" className="mr-2 flex h-full w-[38px] items-center justify-center">
      <svg viewBox="0 0 14 12" className="h-3 w-3.5" fill="none" stroke="#555"><path d="M.500 .500h13v11M.500 0v12M5 .500v7M9.500 .500v7" /></svg>
    </button>
    <button aria-label="缩小" className="h-0.5 w-1.5 bg-[#555]" />
    <input
      type="range"
      aria-label="显示比例"
      defaultValue={36}
      className="mx-1 h-3 w-[100px] appearance-none bg-[linear-gradient(#999,#999)] bg-[length:100%_1px] bg-center bg-no-repeat [&::-webkit-slider-thumb]:h-3 [&::-webkit-slider-thumb]:w-1 [&::-webkit-slider-thumb]:appearance-none [&::-webkit-slider-thumb]:bg-[#555]"
    />
    <button aria-label="放大" className="mr-3.5 w-2 text-sm font-bold">+</button>
    <span>70%</span>
  </div>
);

const Watermark = () => (
  <div className="pointer-events-none absolute right-2.5 bottom-2 flex items-end opacity-80">
    <svg viewBox="0 0 84 44" className="h-11 w-[84px]">
      <path d="M2 38Q22 20 40 10L24 26 14 28z" fill="#fff" opacity=".6" />
      <path d="M82 3C58-1 40 12 40 27c0 7 4 12 11 11-6-8-3-20 9-27 6-4 14-7 22-8z" fill="#3683c4" />
      <path d="M76 14c8 12-4 27-26 29 12-3 20-10 20-18 0-4-3-6-7-5 4-4 10-6 13-6z" fill="#5db54a" />
      <path d="M45 41c10 2 22-2 28-10-4 8-14 13-23 12z" fill="#e5cf45" />
      <path d="M67 21c-8-3-17 3-16 9 1 4 8 4 10 0-3 1-5 0-5-2 0-4 6-7 11-7z" fill="#3b84cc" />
    </svg>
    <div className="flex flex-col">
      <span className="text-[21px] leading-6 font-bold text-[#4b8fd0]">极光下载站</span>
      <span className="font-['Liberation_Sans',sans-serif] text-base leading-5 font-bold text-[#3fae5a]">www.xz7.com</span>
    </div>
  </div>
);

export default function App() {
  return (
    <div className="relative h-screen overflow-hidden border-x border-[#217346] bg-[#e6e6e6] font-['Noto_Sans_CJK_SC',sans-serif]">
      {/* the status bar runs past the bottom of the window */}
      <div className="flex h-[calc(100vh+11px)] flex-col">
        <TitleBar />
        <RibbonTabs />
        <Ribbon />
        <QuickAccess />
        <FormulaBar />
        <div className="mt-2.5 flex min-h-0 flex-1">
          <div className="relative min-w-0 flex-1 overflow-hidden">
            <Grid />
            {/* selected range A2:O2 */}
            <div className="absolute top-[43px] left-[18px] h-[35px] w-[1293px] border-2 border-[#217346]">
              <div className="size-full border border-white" />
              <span className="absolute -right-1 -bottom-1 size-1.5 border border-white bg-[#217346]" />
            </div>
            <QuickAnalysis />
            <svg viewBox="0 0 16 21" className="absolute top-[73px] left-[762px] h-[21px] w-4">
              <path d="M1 1v15l3.500-3 3 6.500 2.500-1-3-6.500h5z" fill="#fff" stroke="#000" />
              <path d="M12.500 1v5M10 3.500h5" stroke="#000" />
            </svg>
          </div>
          <VerticalScroll />
        </div>
        <SheetTabs />
        <StatusBar />
      </div>
      <div className="absolute right-[361px] bottom-[42px] flex h-7 w-[62px] items-center justify-center gap-0.5 rounded-md border border-[#999] bg-white text-[13px] text-[#333] shadow-md">
        EN
        <svg viewBox="0 0 12 12" className="size-3" fill="none" stroke="#333"><path d="M6 1c5 2 5 9-1 10-2 0-3-1-4-2 5 0 6-4 5-8z" /></svg>
        简
      </div>
      <Watermark />
    </div>
  );
}
